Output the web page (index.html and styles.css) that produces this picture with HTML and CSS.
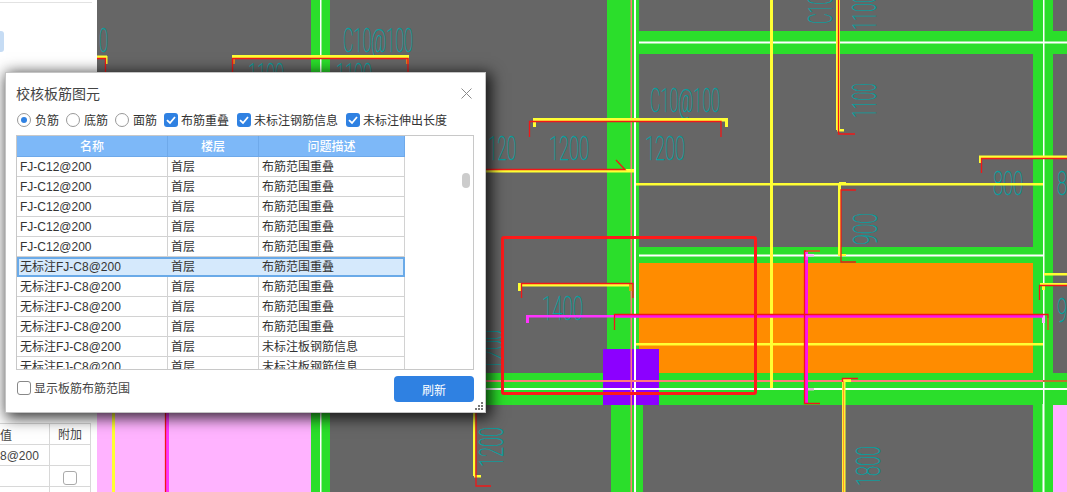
FILE: index.html
```html
<!DOCTYPE html>
<html lang="zh">
<head>
<meta charset="utf-8">
<title>校核板筋图元</title>
<link rel="stylesheet" href="styles.css">
</head>
<body>
<div class="stage">
  <aside class="side">
    <div class="side-top"></div>
    <div class="side-chip"></div>
    <div class="side-grid">
      <div class="sg-row sg-head"><span class="sg-a sg-val">值</span><span class="sg-b">附加</span></div>
      <div class="sg-row"><span class="sg-a sg-num">8@200</span><span class="sg-b"></span></div>
      <div class="sg-row"><span class="sg-a"></span><span class="sg-b"><i class="sg-check"></i></span></div>
      <div class="sg-row"><span class="sg-a"></span><span class="sg-b"><i class="sg-check"></i></span></div>
    </div>
  </aside>
  <svg class="cad" viewBox="97 0 970 492" width="970" height="492" xmlns="http://www.w3.org/2000/svg">
    <rect x="97" y="0" width="970" height="492" fill="#666666"/>
    <!-- pink slabs -->
    <rect x="97" y="405" width="214" height="87" fill="#ffb3ff"/>
    <rect x="1053" y="404" width="14" height="88" fill="#ffb3ff"/>
    <!-- orange slab -->
    <rect x="639" y="263" width="394" height="110" fill="#ff8c00"/>
    <!-- beams -->
    <g fill="#2bde2b">
      <rect x="311" y="0" width="19" height="492"/>
      <rect x="607" y="0" width="32" height="405"/>
      <rect x="611" y="405" width="32" height="87"/>
      <rect x="1033" y="0" width="20" height="492"/>
      <rect x="639" y="31" width="428" height="23"/>
      <rect x="639" y="247" width="414" height="16"/>
      <rect x="330" y="373" width="737" height="32"/>
    </g>
    <!-- purple column -->
    <rect x="603" y="349" width="56" height="56" fill="#8c00ff"/>
    <!-- white axis lines -->
    <g fill="#ffffff">
      <rect x="320" y="0" width="1.5" height="492"/>
      <rect x="634" y="0" width="2" height="492"/>
      <rect x="1043" y="0" width="1.5" height="404"/>
      <rect x="1042.5" y="404" width="2" height="88"/>
      <rect x="639" y="41.500" width="428" height="2"/>
      <rect x="639" y="254.500" width="404" height="2"/>
      <rect x="330" y="388" width="737" height="2"/>
    </g>
    <!-- salmon lines -->
    <rect x="630.500" y="0" width="1.500" height="492" fill="#ff7a7a"/>
    <rect x="330" y="380" width="713" height="2" fill="#ff7a7a"/>
    <rect x="1043" y="380" width="24" height="2" fill="#b8762a"/>
    <!-- dimension text -->
    <g class="dim">
      <text x="99" y="52" textLength="9" lengthAdjust="spacingAndGlyphs">0</text>
      <text x="343" y="52" textLength="70" lengthAdjust="spacingAndGlyphs">C10@100</text>
      <text x="248" y="87" textLength="36" lengthAdjust="spacingAndGlyphs">1100</text>
      <text x="336" y="87" textLength="36" lengthAdjust="spacingAndGlyphs">1100</text>
      <text x="650" y="112" textLength="70" lengthAdjust="spacingAndGlyphs">C10@100</text>
      <text x="488" y="160" textLength="28" lengthAdjust="spacingAndGlyphs">120</text>
      <text x="549" y="160" textLength="40" lengthAdjust="spacingAndGlyphs">1200</text>
      <text x="645" y="160" textLength="40" lengthAdjust="spacingAndGlyphs">1200</text>
      <text x="993" y="195" textLength="30" lengthAdjust="spacingAndGlyphs">800</text>
      <text x="1057" y="195" textLength="10" lengthAdjust="spacingAndGlyphs">8</text>
      <text x="542" y="320" textLength="41" lengthAdjust="spacingAndGlyphs">1400</text>
      <text x="1057" y="322" textLength="10" lengthAdjust="spacingAndGlyphs">9</text>
      <text transform="translate(876 118) rotate(-90)" textLength="35" lengthAdjust="spacingAndGlyphs">1100</text>
      <text transform="translate(876 30) rotate(-90)" textLength="36" lengthAdjust="spacingAndGlyphs">1100</text>
      <text transform="translate(832 24) rotate(-90)" textLength="70" lengthAdjust="spacingAndGlyphs">C10@100</text>
      <text transform="translate(877 245) rotate(-90)" textLength="32" lengthAdjust="spacingAndGlyphs">900</text>
      <text transform="translate(880 486) rotate(-90)" textLength="40" lengthAdjust="spacingAndGlyphs">1800</text>
      <text transform="translate(503 467) rotate(-90)" textLength="40" lengthAdjust="spacingAndGlyphs">1200</text>
      <text transform="translate(503 370) rotate(-90)" textLength="40" lengthAdjust="spacingAndGlyphs">1200</text>
    </g>
    <!-- yellow rebar -->
    <g fill="#ffff33">
      <rect x="97" y="55.500" width="10" height="2.500"/>
      <rect x="105" y="56" width="2.500" height="8"/>
      <rect x="232" y="55" width="177" height="3"/>
      <rect x="232" y="56" width="3" height="8"/>
      <rect x="406" y="56" width="3" height="8"/>
      <rect x="533" y="118" width="195" height="3.500"/>
      <rect x="533" y="118" width="3" height="9"/>
      <rect x="725" y="118" width="3" height="9"/>
      <rect x="486" y="169" width="148" height="3.500"/>
      <rect x="636" y="183" width="407" height="2.500"/>
      <rect x="770" y="0" width="3" height="388"/>
      <rect x="836" y="0" width="4" height="130"/>
      <rect x="837" y="129" width="7" height="2.500"/>
      <rect x="979" y="155.500" width="88" height="2.500"/>
      <rect x="979" y="156" width="3" height="7"/>
      <rect x="838" y="183" width="3" height="73"/>
      <rect x="839" y="182" width="7" height="2"/>
      <rect x="840" y="254" width="6" height="2"/>
      <rect x="518" y="283" width="115" height="3.500"/>
      <rect x="518" y="283" width="3" height="8"/>
      <rect x="636" y="343" width="407" height="2.500"/>
      <rect x="1044" y="273" width="23" height="2.500"/>
      <rect x="1040" y="283" width="27" height="2.500"/>
      <rect x="1042" y="283" width="3" height="7"/>
      <rect x="842" y="381" width="3.500" height="111"/>
      <rect x="842" y="379" width="9" height="3"/>
      <rect x="473" y="405" width="2.500" height="71"/>
      <rect x="474" y="475" width="7" height="2.500"/>
      <rect x="112" y="405" width="3" height="87"/>
    </g>
    <rect x="629" y="283" width="4" height="8" fill="#d8a010"/>
    <rect x="232" y="58" width="3" height="6" fill="#e08020"/>
    <rect x="406" y="58" width="3" height="6" fill="#e08020"/>
    <!-- magenta rebar -->
    <g fill="#ff33ff">
      <rect x="526" y="315" width="517" height="2.500"/>
      <rect x="526" y="315" width="3" height="8"/>
      <rect x="805" y="252" width="3" height="151"/>
      <rect x="165.500" y="405" width="3.500" height="87"/>
    </g>
    <g fill="#ffb3ff">
      <rect x="806" y="254" width="8" height="2.500"/>
      <rect x="1042" y="315" width="3" height="8"/>
    </g>
    <rect x="806" y="388" width="8" height="2.500" fill="#e0b8d8"/>
    <rect x="614" y="315" width="429" height="2.500" fill="#ff11ee"/>
    <rect x="805" y="260" width="3" height="143" fill="#ff11ee"/>
    <!-- red thin lines -->
    <g fill="none" stroke="#f01818" stroke-width="1.300">
      <path d="M97 58.500H105.500V72"/>
      <path d="M232.500 72V58.500H408V72"/>
      <path d="M529.500 137V121.500H721V137"/>
      <path d="M486 169.500H625L616 160"/>
      <path d="M838.500 0V134H855"/>
      <path d="M981.500 173V158.500H1067"/>
      <path d="M856 190H841V262H856"/>
      <path d="M521.500 298V283.500H633V298"/>
      <path d="M614.500 330V314.500H1048V330"/>
      <path d="M820 251H804.500V403.500H820"/>
      <path d="M1039.500 300V285.500H1067"/>
      <path d="M858 378.500H842.500V382"/>
      <path d="M476 405V486H491"/>
      <path d="M165.500 405V492"/>
      <path d="M843.500 381V492" stroke="#ff9a30"/>
    </g>
    <path d="M806 251H820" stroke="#b8762a" stroke-width="1.500" fill="none"/>
    <path d="M1048 318V330" stroke="#b8762a" stroke-width="1.500" fill="none"/>
    <!-- selection box -->
    <rect x="502.500" y="237.500" width="253" height="156" rx="1.500" fill="none" stroke="#ff1a1a" stroke-width="3"/>
  </svg>

  <section class="dialog">
    <header class="dlg-head">
      <h1 class="dlg-title">校核板筋图元</h1>
      <svg class="dlg-close" viewBox="0 0 11 11" width="11" height="11"><path d="M0.500 0.500L10.500 10.500M10.500 0.500L0.500 10.500" stroke="#8a8a8a" stroke-width="1" fill="none"/></svg>
    </header>
    <div class="opts">
      <label class="opt opt-radio"><i class="radio radio-on"></i>负筋</label>
      <label class="opt opt-radio"><i class="radio"></i>底筋</label>
      <label class="opt opt-radio"><i class="radio"></i>面筋</label>
      <label class="opt opt-check"><i class="check"><svg viewBox="0 0 14 14" width="14" height="14"><path d="M3 7.200L6 10L11 4" stroke="#fff" stroke-width="1.800" fill="none"/></svg></i>布筋重叠</label>
      <label class="opt opt-check"><i class="check"><svg viewBox="0 0 14 14" width="14" height="14"><path d="M3 7.200L6 10L11 4" stroke="#fff" stroke-width="1.800" fill="none"/></svg></i>未标注钢筋信息</label>
      <label class="opt"><i class="check"><svg viewBox="0 0 14 14" width="14" height="14"><path d="M3 7.200L6 10L11 4" stroke="#fff" stroke-width="1.800" fill="none"/></svg></i>未标注伸出长度</label>
    </div>
    <div class="tbl-wrap">
      <div class="tbl">
        <div class="tr th"><span>名称</span><span>楼层</span><span>问题描述</span></div>
        <div class="tr"><span>FJ-C12@200</span><span>首层</span><span>布筋范围重叠</span></div>
        <div class="tr"><span>FJ-C12@200</span><span>首层</span><span>布筋范围重叠</span></div>
        <div class="tr"><span>FJ-C12@200</span><span>首层</span><span>布筋范围重叠</span></div>
        <div class="tr"><span>FJ-C12@200</span><span>首层</span><span>布筋范围重叠</span></div>
        <div class="tr"><span>FJ-C12@200</span><span>首层</span><span>布筋范围重叠</span></div>
        <div class="tr sel"><span>无标注FJ-C8@200</span><span>首层</span><span>布筋范围重叠</span></div>
        <div class="tr"><span>无标注FJ-C8@200</span><span>首层</span><span>布筋范围重叠</span></div>
        <div class="tr"><span>无标注FJ-C8@200</span><span>首层</span><span>布筋范围重叠</span></div>
        <div class="tr"><span>无标注FJ-C8@200</span><span>首层</span><span>布筋范围重叠</span></div>
        <div class="tr"><span>无标注FJ-C8@200</span><span>首层</span><span>未标注板钢筋信息</span></div>
        <div class="tr"><span>无标注FJ-C8@200</span><span>首层</span><span>未标注板钢筋信息</span></div>
      </div>
      <div class="scroll"><div class="thumb"></div></div>
    </div>
    <footer class="dlg-foot">
      <label class="opt show-range"><i class="box"></i>显示板筋布筋范围</label>
      <button class="btn" type="button">刷新</button>
    </footer>
    <svg class="grip" viewBox="0 0 9 9" width="9" height="9"><path d="M6 0h2v2H6zM3 3h2v2H3zM6 3h2v2H6zM0 6h2v2H0zM3 6h2v2H3zM6 6h2v2H6z" fill="#777"/></svg>
  </section>
</div>
</body>
</html>
```
FILE: styles.css
```css
* { box-sizing: border-box; }
html, body { margin: 0; padding: 0; background: #fff; }
body { font-family: "Noto Sans CJK SC", "Liberation Sans", sans-serif; }
.stage { position: relative; display: flex; width: 1067px; height: 492px; overflow: hidden; }

.side { width: 97px; flex: none; background: #fff; display: flex; flex-direction: column; position: relative; }
.side-top { height: 3px; width: 92px; border-bottom: 1px solid #e2e2e2; }
.side-chip { width: 4px; height: 21px; margin-top: 28px; background: #c6dcf4; border-radius: 0 3px 3px 0; }
.side-grid { margin-top: auto; width: 91px; height: 69px; border-top: 1px solid #d8d8d8; border-right: 1px solid #d8d8d8; font-size: 12px; color: #444; }
.sg-row { display: flex; height: 21px; border-bottom: 1px solid #d8d8d8; }
.sg-a { width: 50px; border-right: 1px solid #d8d8d8; white-space: nowrap; overflow: hidden; line-height: 22px; }
.sg-num { font-family: "Liberation Sans", sans-serif; }
.sg-b { flex: 1; display: flex; justify-content: center; align-items: center; line-height: 22px; }
.sg-check { display: block; width: 14px; height: 14px; border: 1px solid #aaa; border-radius: 3px; margin-top: 3px; flex: none; }

.cad { display: block; flex: none; }
.dim text { font-family: "Roboto", "Liberation Sans", sans-serif; font-weight: 100; font-size: 34px; fill: #00a3a3; stroke: #00a3a3; stroke-width: .3; }

.dialog { position: absolute; left: 5px; top: 72px; width: 481px; height: 341px; background: #fff; border: 1px solid #c4c4c4; box-shadow: 3px 3px 14px 2px rgba(0,0,0,.8); display: flex; flex-direction: column; padding: 0 11px 0 10px; font-size: 12px; color: #333; }
.dlg-head { display: flex; justify-content: space-between; align-items: center; height: 39px; padding-top: 1px; padding-right: 2px; }
.dlg-title { margin: 0; font-size: 14px; font-weight: 400; color: #444; line-height: 20px; }
.dlg-close { display: block; }

.opts { display: flex; align-items: center; height: 16px; white-space: nowrap; padding-left: 1px; color: #333; }
.opt { display: flex; align-items: center; line-height: 16px; }
.opt-radio { margin-right: 7px; }
.opt-check { margin-right: 8px; }
.radio { display: block; width: 14px; height: 14px; border: 1px solid #999; border-radius: 50%; margin-right: 4px; position: relative; background: #fff; }
.radio-on::after { content: ""; position: absolute; left: 3px; top: 3px; width: 6px; height: 6px; border-radius: 50%; background: #2f81e2; }
.check { display: block; width: 14px; height: 14px; border-radius: 3px; background: #2f81e2; margin-right: 3px; }
.check svg { display: block; }
.box { display: block; width: 14px; height: 14px; border: 1px solid #888; border-radius: 3px; margin-right: 3px; }

.tbl-wrap { position: relative; margin-top: 7px; width: 458px; height: 235px; border: 1px solid #c8c8c8; overflow: hidden; flex: none; }
.tbl { width: 388px; font-family: "Liberation Sans", "Noto Sans CJK SC", sans-serif; }
.tr { display: grid; grid-template-columns: 151px 91px 146px; height: 20px; border-bottom: 1px solid #d2d2d2; line-height: 20px; color: #333; }
.tr span { padding-left: 3px; border-right: 1px solid #d2d2d2; white-space: nowrap; overflow: hidden; }
.th { background: #7db8f8; color: #fff; border-bottom: 1px solid #6ea9ea; height: 21px; }
.th span { text-align: center; padding-left: 0; border-right: 1px solid #6ea9ea; font-family: "Noto Sans CJK SC", sans-serif; font-weight: 500; }
.sel { background: #d5e9fc; outline: 2px solid #6aaae8; outline-offset: -2px; }
.sel span { border-right-color: transparent; }
.scroll { position: absolute; left: 445px; top: 37px; width: 8px; }
.thumb { height: 15px; background: #cccccc; border-radius: 4px; }

.dlg-foot { display: flex; justify-content: space-between; align-items: center; height: 26px; margin-top: 6px; padding-left: 1px; width: 458px; }
.show-range { margin-bottom: 2px; color: #444; }
.btn { width: 80px; height: 26px; border: 0; border-radius: 4px; background: #2f81e2; color: #fff; font: inherit; padding: 0; }
.grip { position: absolute; right: 1px; bottom: 1px; display: block; }
```
